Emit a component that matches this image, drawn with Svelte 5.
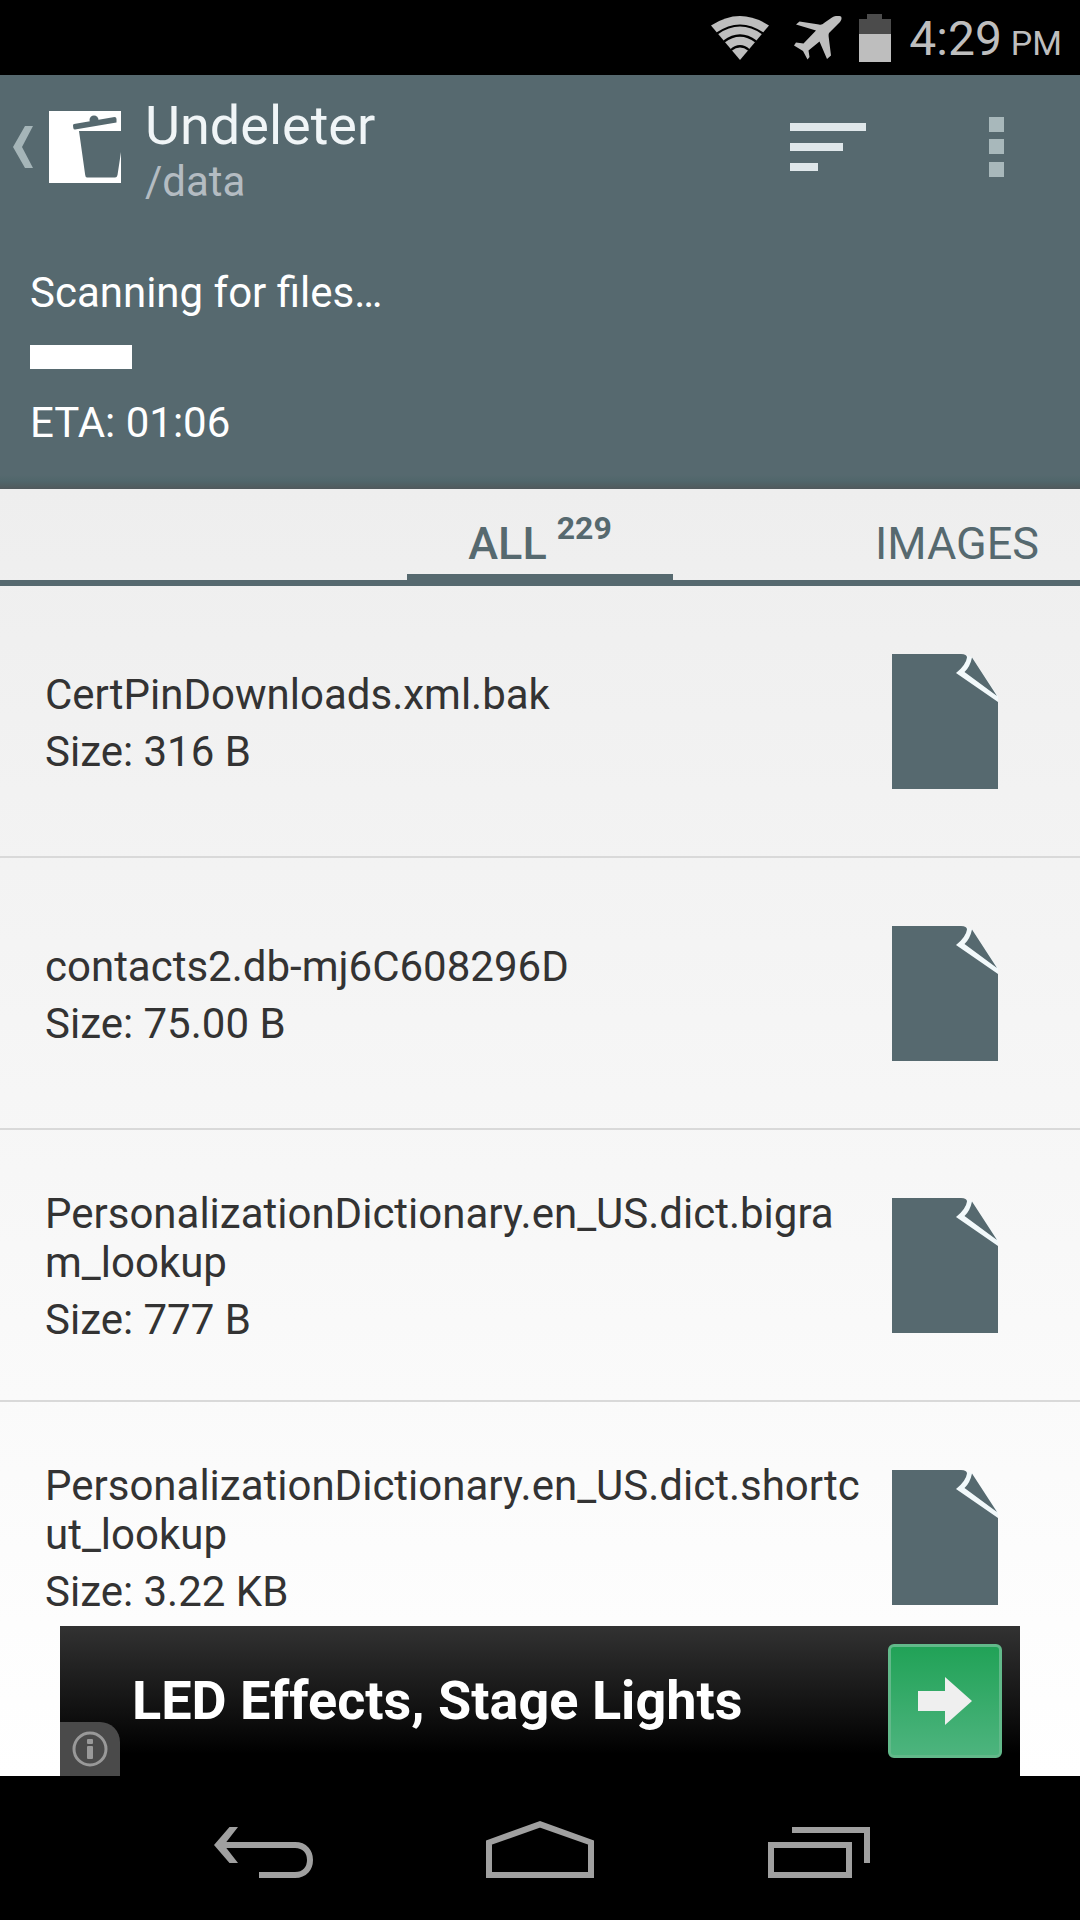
<script>
  let activeTab = $state('all');
  let progress = $state(10);

  const tabs = [
    { id: 'all', label: 'ALL', count: 229 },
    { id: 'images', label: 'IMAGES' }
  ];

  const files = [
    { name: 'CertPinDownloads.xml.bak', size: '316 B' },
    { name: 'contacts2.db-mj6C608296D', size: '75.00 B' },
    { name: 'PersonalizationDictionary.en_US.dict.bigram_lookup', size: '777 B' },
    { name: 'PersonalizationDictionary.en_US.dict.shortcut_lookup', size: '3.22 KB' }
  ];
</script>

<div class="screen">
  <!-- Status bar -->
  <div class="status-bar">
    <svg class="wifi" width="58" height="44" viewBox="0 0 58 44" fill="#bebebe">
      <path d="M0 9.500Q29 -9.500 58 9.500L29 44Z"></path>
      <g fill="none" stroke="#000" stroke-width="2.200">
        <path d="M6 17.500Q29 1.500 52 17.500"></path>
        <path d="M13 25.500Q29 13.500 45 25.500"></path>
        <path d="M20 34Q29 26.500 38 34"></path>
      </g>
    </svg>
    <svg class="plane" width="48" height="44" viewBox="0 0 48 44" fill="#bebebe">
      <path d="M47 0.500C48 2 47.500 4 46 6L35.500 16.500C34.500 17.500 34.500 19 34.700 21L37 39.500L33 43L25.500 25.500L14.500 34.500L15.500 41L13.500 43.500L9 35L0 29.500L2 26.500L9.500 27.500L22 14.500L2 8.500L5.500 5.500L25 8.500C27 9 28.500 8.500 30 7L38 1.500C41 -0.500 45 -0.500 47 0.500Z"></path>
    </svg>
    <svg class="battery" width="32" height="48" viewBox="0 0 32 48">
      <path d="M8 0H23V5H32V20H0V5H8Z" fill="#4b4b4b"></path>
      <rect y="20" width="32" height="28" fill="#bebebe"></rect>
    </svg>
    <div class="clock">4:29<span class="meridiem">PM</span></div>
  </div>

  <header>
    <div class="action-bar">
      <button class="up" aria-label="Navigate up">
        <svg width="20" height="42" viewBox="0 0 20 42" fill="#a5b5b8">
          <path d="M12 0H20L9 21L20 42H12L0 21Z"></path>
        </svg>
        <svg width="72" height="72" viewBox="0 0 72 72">
          <rect width="72" height="72" fill="#fff"></rect>
          <g fill="#56696f">
            <path d="M30 20H72V41L68.500 64Q68 66.500 66 66.500H38Q36.500 66.500 36.200 64Z"></path>
            <path d="M25 13L65.500 6Q67.500 6 67.500 8V11.500L26 18.500Q24.500 18.500 24.300 17L24 14.500Q24 13 25 13Z"></path>
            <circle cx="45" cy="9" r="4.500"></circle>
          </g>
        </svg>
      </button>
      <div class="titles">
        <h1>Undeleter</h1>
        <p>/data</p>
      </div>
      <button class="sort" aria-label="Sort">
        <svg width="76" height="48" viewBox="0 0 76 48" fill="#dfe7ea">
          <rect width="76" height="8"></rect>
          <rect y="20" width="53" height="8"></rect>
          <rect y="40" width="28" height="8"></rect>
        </svg>
      </button>
      <button class="overflow" aria-label="More options">
        <svg width="15" height="60" viewBox="0 0 15 60" fill="#a8b8bb">
          <rect width="15" height="15"></rect>
          <rect y="22" width="15" height="15"></rect>
          <rect y="45" width="15" height="15"></rect>
        </svg>
      </button>
    </div>

    <div class="scan">
      <label for="scan-progress">Scanning for files…</label>
      <progress id="scan-progress" value={progress} max="100"></progress>
      <p>ETA: 01:06</p>
    </div>
  </header>

  <div class="content">
    <div class="tabs" role="tablist">
      {#each tabs as tab (tab.id)}
        <button
          class="tab"
          class:active={activeTab === tab.id}
          role="tab"
          aria-selected={activeTab === tab.id}
          onclick={() => (activeTab = tab.id)}
        >
          {tab.label}{#if tab.count}<span class="count">{tab.count}</span>{/if}
        </button>
      {/each}
    </div>

    <ul class="files">
      {#each files as file (file.name)}
        <li class="file">
          <div class="file-info">
            <p class="file-name">{file.name}</p>
            <p class="file-size">Size: {file.size}</p>
          </div>
          <svg class="file-icon" width="106" height="135" viewBox="0 0 106 135">
            <path d="M74 1L80 3.500L106 42V49L63 19Q75 11 74 1Z" fill="#f2f9fb"></path>
            <path d="M0 0H69Q75 0 75 3.500Q74 11 64 19L106 48V135H0Z" fill="#56696f"></path>
            <path d="M80 3.500L105 42L72.500 18Q78 13 80 3.500Z" fill="#56696f"></path>
          </svg>
        </li>
      {/each}
    </ul>

    <!-- Ad banner -->
    <div class="ad">
      <span class="ad-title">LED Effects, Stage Lights</span>
      <button class="ad-go" aria-label="Open ad">
        <svg width="54" height="48" viewBox="0 0 54 48" fill="#efefef">
          <path d="M0 14H27V0L54 24L27 48V34H0Z"></path>
        </svg>
      </button>
      <button class="ad-info" aria-label="About this ad">
        <svg width="36" height="36" viewBox="0 0 36 36" fill="#999">
          <circle cx="18" cy="18" r="16" fill="none" stroke="#999" stroke-width="3"></circle>
          <rect x="15" y="8" width="6" height="5" rx="1"></rect>
          <rect x="15" y="15" width="6" height="13" rx="1"></rect>
        </svg>
      </button>
    </div>
  </div>

  <!-- System navigation -->
  <nav class="nav-bar">
    <button aria-label="Back">
      <svg width="108" height="60" viewBox="0 0 108 60" fill="none" stroke="#a0a0a0" stroke-width="6">
        <path d="M10 27H85C95 27 100 34 100 42C100 50 95 57 85 57H49"></path>
        <path d="M19.500 9H28L14 27L28 45H19.500L4 27Z" fill="#a0a0a0" stroke="none"></path>
      </svg>
    </button>
    <button aria-label="Home">
      <svg width="108" height="60" viewBox="0 0 108 60" fill="none" stroke="#a0a0a0" stroke-width="6">
        <path d="M3 57V24.500L54 6.300L105 24.500V57Z"></path>
      </svg>
    </button>
    <button aria-label="Recent apps">
      <svg width="108" height="60" viewBox="0 0 108 60" fill="none" stroke="#a0a0a0" stroke-width="6">
        <rect x="9" y="27" width="78" height="30"></rect>
        <path d="M30 12H105V45"></path>
      </svg>
    </button>
  </nav>
</div>

<style>
  :global(body) {
    margin: 0;
    background: #000;
  }

  .screen {
    display: flex;
    flex-direction: column;
    height: 100vh;
    font-family: Roboto, sans-serif;
    font-size: 42px;
    line-height: 48px;
    color: #333;
  }

  h1,
  p,
  ul {
    margin: 0;
    padding: 0;
  }

  button {
    display: flex;
    align-items: center;
    justify-content: center;
    padding: 0;
    border: none;
    background: none;
    font: inherit;
    color: inherit;
    cursor: pointer;
  }

  svg {
    display: block;
    flex-shrink: 0;
  }

  .status-bar {
    display: flex;
    align-items: center;
    justify-content: flex-end;
    height: 75px;
    padding-right: 18px;
    background: #000;
    color: #bebebe;
  }

  .plane {
    margin-left: 25px;
  }

  .battery {
    margin-left: 17px;
  }

  .clock {
    margin-left: 18px;
    padding-top: 6px;
    font-size: 48px;
    white-space: nowrap;
  }

  .meridiem {
    margin-left: 9px;
    font-size: 34px;
  }

  header {
    background: linear-gradient(to top, #50595c, #50666b 8px, #56696f 14px);
    color: #fff;
  }

  .action-bar {
    display: flex;
    align-items: center;
    height: 144px;
    padding: 0 76px 0 13px;
  }

  .up {
    gap: 16px;
  }

  .titles {
    flex: 1;
    display: flex;
    flex-direction: column;
    gap: 4px;
    padding: 10px 0 0 24px;
  }

  h1 {
    font-size: 54px;
    font-weight: 400;
    line-height: 56px;
    color: #f0f5f7;
  }

  .titles p {
    color: #b4bcc2;
  }

  .overflow {
    margin-left: 123px;
  }

  .scan {
    display: flex;
    flex-direction: column;
    gap: 28px;
    padding: 50px 30px 42px;
  }

  .scan p {
    padding-top: 2px;
  }

  progress {
    display: block;
    width: 100%;
    height: 24px;
    border: none;
    appearance: none;
    background: transparent;
  }

  progress::-webkit-progress-bar {
    background: transparent;
  }

  progress::-webkit-progress-value {
    background: #fff;
  }

  .content {
    flex: 1;
    display: flex;
    flex-direction: column;
    min-height: 0;
    background: linear-gradient(#eeeeee, #ffffff);
  }

  .tabs {
    display: grid;
    grid-template-columns: 1fr 266px 1fr;
    border-bottom: 6px solid #56696f;
  }

  .tab {
    align-items: flex-start;
    padding: 28px 0 3px;
    border-bottom: 6px solid transparent;
    font-size: 45px;
    line-height: 54px;
    color: #56696f;
  }

  .tab:first-child {
    grid-column: 2;
  }

  .tab:last-child {
    justify-content: flex-end;
    padding-right: 41px;
  }

  .tab.active {
    border-bottom-color: #56696f;
    font-weight: 500;
  }

  .count {
    margin-left: 10px;
    font-size: 32px;
    font-weight: 700;
    line-height: 22px;
  }

  .files {
    flex: 1;
    min-height: 0;
    overflow-y: auto;
    scrollbar-width: none;
    list-style: none;
  }

  .file {
    display: flex;
    align-items: center;
    justify-content: space-between;
    gap: 28px;
    box-sizing: border-box;
    min-height: 272px;
    padding: 0 82px 0 45px;
    border-bottom: 2px solid #d9d9d9;
    line-height: 49px;
  }

  .file-info {
    padding-top: 3px;
  }

  .file-name {
    word-break: break-all;
  }

  .file-size {
    margin-top: 8px;
  }

  .ad {
    position: relative;
    display: flex;
    align-items: center;
    justify-content: space-between;
    height: 150px;
    margin: 0 60px;
    padding: 0 18px 0 72px;
    background: linear-gradient(#323232, #000 85%);
  }

  .ad-title {
    font-size: 54px;
    font-weight: 700;
    line-height: 60px;
    color: #fff;
  }

  .ad-go {
    box-sizing: border-box;
    width: 114px;
    height: 114px;
    border: 3px solid #62b98a;
    border-radius: 6px;
    background: linear-gradient(#21a257, #4db47e);
  }

  .ad-info {
    position: absolute;
    left: 0;
    bottom: 0;
    width: 60px;
    height: 54px;
    border-top-right-radius: 20px;
    background: #4a4a4a;
  }

  .nav-bar {
    display: grid;
    grid-template-columns: repeat(3, 276px);
    justify-content: center;
    height: 144px;
    background: #000;
  }
</style>
